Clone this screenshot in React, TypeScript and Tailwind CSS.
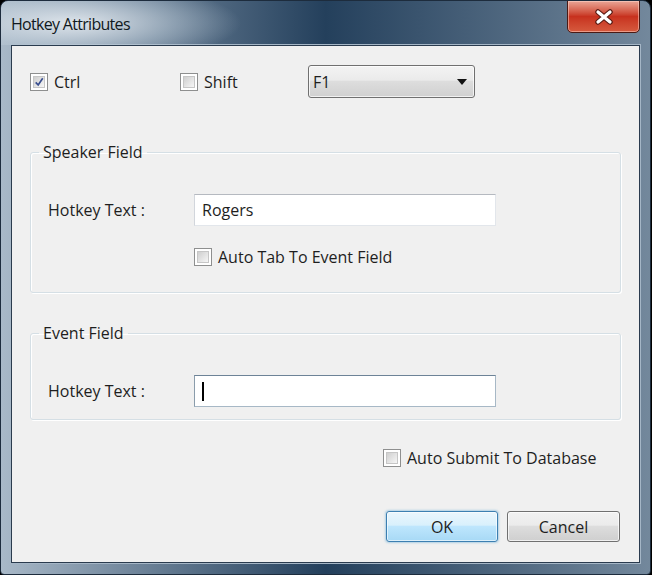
import { ReactNode } from "react";

const font = { fontFamily: '"Open Sans", "Noto Sans", "Liberation Sans", sans-serif' };

function CheckBox({ checked, label }: { checked?: boolean; label: string }) {
  return (
    <div className="flex items-center gap-[6px]">
      <div className="w-[18px] h-[18px] border border-[#8e8f8f] bg-white p-[2px] flex-shrink-0">
        <div className="w-full h-full border border-[#c6c6c6] bg-gradient-to-br from-[#cfcfcf] to-[#f6f6f6] flex items-center justify-center">
          {checked && (
            <svg width="12" height="12" viewBox="0 0 12 12">
              <path d="M2 6.5 L5 9.5 L10.5 1.5" fill="none" stroke="#3a4f8f" strokeWidth="2" />
            </svg>
          )}
        </div>
      </div>
      <span className="text-[16px] text-[#1e1e1e] leading-none">{label}</span>
    </div>
  );
}

function GroupBox({ title, children, className }: { title: string; children: ReactNode; className?: string }) {
  return (
    <fieldset className={`mx-[18px] border border-[#d5dfe5] rounded-[3px] shadow-[inset_1px_1px_0_0_#ffffff,1px_1px_0_0_#ffffff] ${className ?? ""}`}>
      <legend className="ml-[8px] px-[4px] text-[16px] text-[#1e1e1e] leading-[20px]">{title}</legend>
      {children}
    </fieldset>
  );
}

function TextBox({ value, focused }: { value?: string; focused?: boolean }) {
  return (
    <div
      className={`w-[302px] h-[32px] bg-white border flex items-center px-[7px] text-[16px] text-[#1e1e1e] ${
        focused
          ? "border-[#a7b8c6] border-t-[#6d8397] border-l-[#8a9cab]"
          : "border-[#e2e6eb] border-t-[#b5b9c0] border-l-[#d2d6dc]"
      }`}
    >
      {value}
      {focused && <div className="w-[2px] h-[19px] bg-black" />}
    </div>
  );
}

export default function App() {
  return (
    <div className="w-[652px] h-[575px] bg-black" style={font}>
      <div className="w-[651px] h-[575px] rounded-t-[8px] rounded-b-[4px] border border-[#1d2c3d] bg-gradient-to-r from-[#a9b9c8] via-[#24405c] to-[#73889c] flex flex-col relative overflow-hidden">
        {/* title bar */}
        <div className="h-[44px] flex items-start relative bg-[radial-gradient(ellipse_170px_40px_at_70px_22px,rgba(226,232,238,0.95),rgba(190,204,216,0.5)_60%,rgba(0,0,0,0)_100%)]">
          <span className="ml-[10px] mt-[11px] text-[16px] text-[#101820] tracking-[-0.7px]">Hotkey Attributes</span>
          <div className="absolute right-[10px] top-[-1px] w-[73px] h-[33px] rounded-b-[5px] border border-[#4a1a14] bg-gradient-to-b from-[#e9a596] via-[#c7311e] to-[#d65a3e] flex items-center justify-center shadow-[inset_0_0_0_1px_rgba(255,220,210,0.5)]">
            <svg width="20" height="16" viewBox="0 0 20 16">
              <path d="M4 3 L16 13 M16 3 L4 13" stroke="#5a1c14" strokeWidth="5.5" strokeLinecap="round" />
              <path d="M4 3 L16 13 M16 3 L4 13" stroke="#ffffff" strokeWidth="3.2" strokeLinecap="round" />
            </svg>
          </div>
        </div>
        {/* client */}
        <div className="ml-[10px] mr-[10px] mb-[11px] flex-1 border border-[#2a3b4e] shadow-[0_0_0_1px_#a5b6c6] bg-[#f0f0f0] flex flex-col">
          <div className="mt-[19px] h-[33px] flex items-center pl-[18px]">
            <div className="w-[150px]">
              <CheckBox checked label="Ctrl" />
            </div>
            <div className="w-[128px]">
              <CheckBox label="Shift" />
            </div>
            <div className="w-[167px] h-[33px] rounded-[3px] border border-[#707070] bg-[linear-gradient(to_bottom,#f3f3f3_0%,#ebebeb_45%,#dddddd_50%,#d0d0d0_100%)] flex items-center justify-between pl-[4px] pr-[7px] shadow-[inset_0_0_0_1px_rgba(255,255,255,0.7)]">
              <span className="text-[16px] text-[#1e1e1e]">F1</span>
              <svg width="10" height="6" viewBox="0 0 10 6">
                <path d="M0 0 L10 0 L5 6 Z" fill="#111" />
              </svg>
            </div>
          </div>

          <GroupBox title="Speaker Field" className="mt-[44px] h-[151px]">
            <div className="flex items-center mt-[32px] h-[32px]">
              <span className="w-[163px] pl-[17px] text-[16px] text-[#1e1e1e]">Hotkey Text :</span>
              <TextBox value="Rogers" />
            </div>
            <div className="mt-[22px] ml-[163px]">
              <CheckBox label="Auto Tab To Event Field" />
            </div>
          </GroupBox>

          <GroupBox title="Event Field" className="mt-[30px] h-[97px]">
            <div className="flex items-center mt-[32px] h-[32px]">
              <span className="w-[163px] pl-[17px] text-[16px] text-[#1e1e1e]">Hotkey Text :</span>
              <TextBox focused />
            </div>
          </GroupBox>

          <div className="mt-[29px] ml-[371px]">
            <CheckBox label="Auto Submit To Database" />
          </div>

          <div className="mt-[44px] flex gap-[9px] ml-[374px]">
            <div className="w-[112px] h-[31px] rounded-[3px] border border-[#3c7fb1] bg-[linear-gradient(to_bottom,#eaf6fd_0%,#d9f0fc_45%,#bee6fd_50%,#a7d9f5_100%)] flex items-center justify-center text-[16px] text-[#1e1e1e] shadow-[inset_0_0_0_1px_rgba(255,255,255,0.6),0_0_2px_1px_rgba(80,160,210,0.4)]">
              OK
            </div>
            <div className="w-[113px] h-[31px] rounded-[3px] border border-[#707070] bg-[linear-gradient(to_bottom,#f2f2f2_0%,#ebebeb_45%,#dddddd_50%,#cfcfcf_100%)] flex items-center justify-center text-[16px] text-[#1e1e1e] shadow-[inset_0_0_0_1px_rgba(255,255,255,0.7)]">
              Cancel
            </div>
          </div>
        </div>
      </div>
    </div>
  );
}
